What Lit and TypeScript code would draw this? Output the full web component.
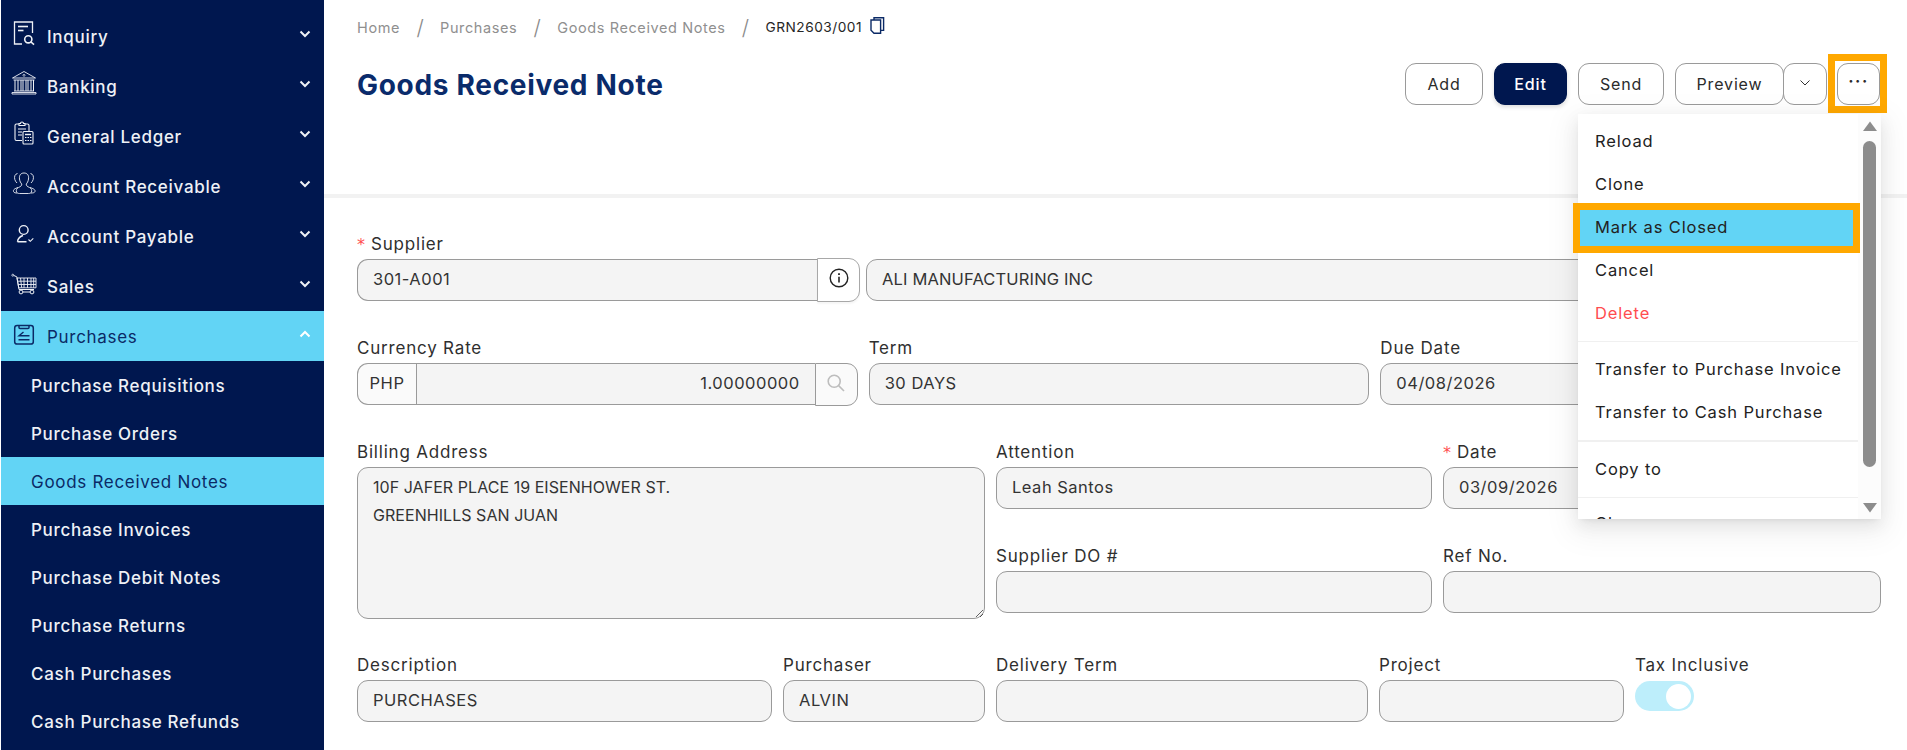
import { LitElement, html, css, svg } from "lit";
import { customElement } from "lit/decorators.js";

const icons: Record<string, unknown> = {
  inquiry: svg`<path d="M24.5 14V3H6.5V25H14"/><path d="M10 7.5H20" stroke-width="1.6"/><path d="M10 11.5H15.5" stroke-width="1.6"/><circle cx="20.3" cy="20.3" r="3.6" stroke-width="1.6"/><path d="M23 23L26 25.7" stroke-width="1.6"/>`,
  banking: svg`<path d="M4.5 9L16 2.5L27.5 9Z" stroke-width=".9"/><circle cx="16" cy="6.3" r="1" stroke-width=".7"/><path d="M5.5 11H26.5M6 22H26M4 25H28M4 25V23.5H28V25" stroke-width=".9"/><path d="M7 11V22M10 11V22M13 11V22M15 11V22M18 11V22M20 11V22M23 11V22M25.5 11V22" stroke-width="1"/>`,
  ledger: svg`<path d="M11 5H8.5A1.5 1.5 0 0 0 7 6.5V20A1.5 1.5 0 0 0 8.5 21.5H14" stroke-width="1.1"/><path d="M17 5H19.5A1.5 1.5 0 0 1 21 6.5V12" stroke-width="1.1"/><path d="M11 6.5V4.5H12.5A1.5 1.5 0 0 1 15.5 4.5H17V6.5Z" stroke-width="1.1"/><path d="M10 10H18M10 13H14M10 16H14" stroke-width="1"/><rect x="15" y="12.5" width="10" height="12.5" rx="1" stroke-width="1.1"/><path d="M17 15.5H23" stroke-width="1.4"/><path d="M17 18.5H18.5M19.5 18.5H21M22 18.5H23.5M17 21.5H18.5M19.5 21.5H21M22 21.5H23.5" stroke-width="1.2"/>`,
  ar: svg`<path d="M10 18.5C7 19.5 5 20.5 5.5 22.5C6 23.8 7.5 24 9 24M9.5 4.5C7 5 6 7.5 6.8 10.5C7.2 12 8 13 9 14" stroke-width=".9"/><path d="M22 18.5C25 19.5 27.5 20.5 27 22.5C26.5 23.8 25 24 23 24M22.5 4.5C25 5 26 7.5 25.2 10.5C24.8 12 24 13 23 14" stroke-width=".9"/><path d="M16 4C12.5 4 11 6.5 11.5 10C11.8 12.5 12.8 14 13.8 15C13.8 17 12.5 17.5 10.5 18.5C8.5 19.5 8 21 8.5 23C9 24 10 24.5 11.5 24.5H20.5C22 24.5 23 24 23.5 23C24 21 23.5 19.5 21.5 18.5C19.5 17.5 18.2 17 18.2 15C19.2 14 20.2 12.5 20.5 10C21 6.5 19.5 4 16 4Z" stroke-width=".9"/>`,
  ap: svg`<circle cx="15.7" cy="11" r="4.4" stroke-width="1.4"/><path d="M9.5 22.8C9.8 19.5 12 17.5 15 16.5M9.5 22.8H18.5" stroke-width="1.4"/><path d="M20.5 20.5L22.3 22.3L25.3 19.3" stroke-width="1.1"/>`,
  sales: svg`<circle cx="4.8" cy="6.2" r="1" stroke-width=".8"/><path d="M5.8 6.5L8.8 7.8L11 20.5H26" stroke-width="1"/><path d="M9 9H28V18.8H10.7ZM12.5 9L13.7 18.8M16 9V18.8M19.5 9V18.8M23 9V18.8M25.7 9V18.8M9.6 12.2H28M10.2 15.5H28" stroke-width=".9"/><circle cx="13" cy="23" r="1.9" stroke-width="1"/><circle cx="24" cy="23" r="1.9" stroke-width="1"/><path d="M15 23H22" stroke-width="1"/>`,
  purchases: svg`<rect x="6.7" y="6.5" width="18.6" height="18.6" rx="2.4" stroke-width="1.5"/><path d="M11 6.5V8.5A1 1 0 0 0 12 9.5H20A1 1 0 0 0 21 8.5V6.5" stroke-width="1.5"/><path d="M15.5 13L11 16.8H21.5M10.5 20.8H21.5" stroke-width="1.4"/>`,
};

const chevron = (up = false) =>
  html`<svg class="chev" viewBox="0 0 12 8" width="12" height="8"><path d=${up ? "M1.5 6.5L6 2L10.5 6.5" : "M1.5 1.5L6 6L10.5 1.5"}/></svg>`;

const topNav = [
  ["inquiry", "Inquiry"],
  ["banking", "Banking"],
  ["ledger", "General Ledger"],
  ["ar", "Account Receivable"],
  ["ap", "Account Payable"],
  ["sales", "Sales"],
];
const subNav = [
  "Purchase Requisitions",
  "Purchase Orders",
  "Goods Received Notes",
  "Purchase Invoices",
  "Purchase Debit Notes",
  "Purchase Returns",
  "Cash Purchases",
  "Cash Purchase Refunds",
];

@customElement("app-root")
export class AppRoot extends LitElement {
  static styles = css`
    :host {
      display: flex;
      height: 750px;
      overflow: hidden;
      background: #fff;
      font-family: "Inter", "Noto Sans", sans-serif;
      font-size: 16.5px;
      letter-spacing: 0.5px;
      color: #2b2b2b;
    }
    * { box-sizing: border-box; }

    /* sidebar */
    .side {
      flex: 0 0 323px;
      margin-left: 1px;
      background: #00174f;
      padding-top: 11px;
      color: #eef1f6;
      overflow: hidden;
      font-size: 17px;
      letter-spacing: 0.7px;
      font-weight: 500;
    }
    .row {
      height: 50px;
      display: flex;
      align-items: center;
      padding: 0 13px 0 7px;
    }
    .row svg.ic {
      width: 34px;
      height: 34px;
      margin-right: 5px;
      flex: none;
      fill: none;
      stroke: #eef1f6;
      stroke-width: 1.3;
    }
    .row span { flex: 1; padding-top: 2px; }
    .chev {
      fill: none;
      stroke: #eef1f6;
      stroke-width: 2;
      margin-bottom: 4px;
    }
    .row.active {
      background: #62d4f5;
      color: #0b2a66;
      font-weight: 400;
    }
    .row.active svg.ic { stroke: #0b2a66; }
    .row.active .chev { stroke: #fff; }
    .sub {
      height: 48px;
      display: flex;
      align-items: center;
      padding: 2px 0 0 30px;
    }
    .sub.active {
      background: #62d4f5;
      color: #0b2a66;
      font-weight: 400;
    }

    /* main */
    .main { flex: 1; min-width: 0; display: flex; flex-direction: column; }
    .head {
      height: 198px;
      flex: none;
      border-bottom: 4px solid #f2f2f2;
      padding: 0 26px 0 33px;
    }
    .crumbs {
      height: 34px;
      margin-top: 10px;
      display: flex;
      align-items: center;
      font-size: 14.5px;
      letter-spacing: 0.6px;
      color: #8f8f8f;
    }
    .crumbs .sl {
      font-size: 21px;
      font-weight: 300;
      color: #8a8a8a;
      width: 40px;
      text-align: center;
      letter-spacing: 0;
    }
    .crumbs .cur { color: #262626; font-size: 13.7px; letter-spacing: 0.5px; }
    .crumbs svg { margin-left: 8px; margin-top: -3px; fill: #fff; stroke: #0b2a66; stroke-width: 1.4; }
    .titlebar {
      display: flex;
      justify-content: space-between;
      align-items: flex-start;
      margin-top: 19px;
    }
    h1 {
      margin: 0;
      font-size: 28px;
      line-height: 44px;
      font-weight: 700;
      letter-spacing: 0.7px;
      color: #0a2b6b;
    }
    .btns { display: flex; align-items: flex-start; position: relative; margin-right: 1px; }
    .btn {
      height: 42px;
      border: 1px solid #9a9a9a;
      border-radius: 11px;
      background: #fff;
      display: flex;
      align-items: center;
      justify-content: center;
      color: #2b2b2b;
      font-size: 16px;
      letter-spacing: 0.85px;
      flex: none;
      margin-right: 11px;
    }
    .b-add { width: 78px; }
    .b-edit {
      width: 73px;
      background: #00174f;
      border-color: #00174f;
      color: #fff;
      font-weight: 500;
      box-shadow: 0 2px 4px rgba(0, 0, 0, 0.15);
    }
    .b-send { width: 86px; }
    .b-prev { width: 109px; margin-right: -1px; border-radius: 11px; }
    .b-drop { width: 44px; margin-right: 10px; }
    .b-drop svg { fill: none; stroke: #333; stroke-width: 1; margin-bottom: 2px; }
    .b-more {
      width: 43px;
      margin-right: 0;
      position: relative;
      padding-bottom: 6px;
      letter-spacing: 1.5px;
      font-weight: 700;
    }
    .b-more::after {
      content: "";
      position: absolute;
      left: -10px;
      right: -8px;
      top: -10px;
      bottom: -9px;
      border: 7px solid #ffa800;
      pointer-events: none;
    }

    /* form */
    .form {
      padding: 36px 26px 0 33px;
      display: flex;
      flex-direction: column;
      gap: 37px;
    }
    .r { display: grid; }
    .r1 { grid-template-columns: 503px 1fr; column-gap: 6px; }
    .r2 { grid-template-columns: 1fr 1fr 1fr; column-gap: 11px; margin-top: -1px; }
    .r3 {
      grid-template-columns: 628px 436px 1fr;
      grid-template-rows: 67px 73px;
      column-gap: 11px;
      row-gap: 37px;
      margin-top: -1px;
    }
    .r3 .ta { grid-row: span 2; }
    .r4 { grid-template-columns: 415px 202px 372px 245px 1fr; column-gap: 11px; margin-top: -1px; }
    label {
      display: block;
      height: 20px;
      line-height: 20px;
      margin-bottom: 5px;
      color: #2f2f2f;
      font-size: 17px;
      letter-spacing: 0.8px;
    }
    label i {
      font-style: normal;
      color: #ff4d4f;
      margin-right: 6px;
      font-family: "DejaVu Sans", sans-serif;
      font-size: 16px;
      letter-spacing: 0;
    }
    .inp {
      height: 42px;
      border: 1px solid #9a9a9a;
      border-radius: 11px;
      background: #f4f4f4;
      display: flex;
      align-items: center;
      padding: 0 15px 2px;
      color: #333;
      white-space: nowrap;
    }
    .inp.tight { letter-spacing: 0.15px; }
    .area {
      height: 152px;
      display: block;
      padding: 5px 15px;
      line-height: 28px;
      font-size: 16px;
      letter-spacing: 0.05px;
      white-space: pre-line;
      overflow: hidden;
      resize: both;
    }
    .group { display: flex; }
    .group .inp { flex: 1; min-width: 0; }
    .group .l { border-radius: 11px 0 0 11px; border-right: 0; }
    .group .m { border-radius: 0; border-right: 0; justify-content: flex-end; }
    .addon {
      flex: none;
      display: flex;
      align-items: center;
      justify-content: center;
      border: 1px solid #9a9a9a;
      background: #fafafa;
      height: 42px;
      color: #333;
    }
    .a-php { width: 59px; border-radius: 11px 0 0 11px; border-right: 0; padding-bottom: 2px; }
    .a-info {
      width: 43px;
      height: 44px;
      margin-top: -1px;
      border-radius: 0 11px 11px 0;
      background: #fff;
      border-color: #a8a8a8;
      box-shadow: 0 2px 2px rgba(0, 0, 0, 0.04);
    }
    .a-info svg { fill: none; stroke: #222; margin-bottom: 4px; }
    .a-search { width: 43px; height: 43px; border-radius: 0 11px 11px 0; }
    .a-search svg { fill: none; stroke: #bdbdbd; stroke-width: 1.6; margin-bottom: 3px; }
    .toggle {
      width: 59px;
      height: 30px;
      margin-top: 6px;
      border-radius: 15px;
      background: #bdeefb;
      display: flex;
      align-items: center;
      justify-content: flex-end;
      padding-right: 3px;
    }
    .toggle b { width: 25px; height: 25px; border-radius: 50%; background: #fff; }

    /* menu */
    .menu {
      position: absolute;
      top: 114px;
      left: 1578px;
      width: 303px;
      height: 405px;
      background: #fcfcfc;
      display: flex;
      box-shadow: 0 6px 16px rgba(0, 0, 0, 0.08), 0 3px 6px -4px rgba(0, 0, 0, 0.12), 0 9px 28px 8px rgba(0, 0, 0, 0.05);
      font-size: 16.5px;
      letter-spacing: 0.85px;
      color: #222;
      z-index: 5;
    }
    .list {
      flex: 0 0 280px;
      background: #fff;
      padding-top: 5px;
      clip-path: inset(0 -12px 0 -12px);
    }
    .it {
      height: 43px;
      display: flex;
      align-items: center;
      padding-left: 17px;
      position: relative;
      z-index: 0;
      white-space: nowrap;
    }
    .it.del { color: #ff4d4f; }
    .it.hl::before {
      content: "";
      position: absolute;
      z-index: -1;
      left: -5px;
      right: -2px;
      top: -2px;
      bottom: -5px;
      border: 7px solid #ffa800;
      background: #62d4f5;
    }
    .div { height: 1px; background: #f0f0f0; margin: 7px 0 5px; }
    .div.thick { height: 2px; }
    .div.last { margin-bottom: 3px; }
    .track { flex: 1; display: flex; flex-direction: column; align-items: center; padding-top: 7px; }
    .track svg { fill: #8c8c8c; flex: none; }
    .thumb { width: 13px; height: 326px; border-radius: 7px; background: #8c8c8c; margin: 10px 0 36px; flex: none; }
  `;

  field(text: string, cls = "", req = false, value = "") {
    return html`<div>
      <label>${req ? html`<i>*</i>` : ""}${text}</label>
      <div class="inp ${cls}">${value}</div>
    </div>`;
  }

  render() {
    return html`
      <nav class="side">
        ${topNav.map(
          ([k, t]) => html`<div class="row">
            <svg class="ic" viewBox="0 0 34 34">${icons[k]}</svg><span>${t}</span>${chevron()}
          </div>`
        )}
        <div class="row active">
          <svg class="ic" viewBox="0 0 34 34">${icons.purchases}</svg><span>Purchases</span>${chevron(true)}
        </div>
        ${subNav.map(
          (t) => html`<div class="sub ${t === "Goods Received Notes" ? "active" : ""}">${t}</div>`
        )}
      </nav>

      <main class="main">
        <header class="head">
          <div class="crumbs">
            <span>Home</span><span class="sl">/</span><span>Purchases</span><span class="sl">/</span>
            <span>Goods Received Notes</span><span class="sl">/</span><span class="cur">GRN2603/001</span>
            <svg width="15" height="17" viewBox="0 0 15 17">
              <path d="M4 3V.8H13.6V13.4H10.8"/>
              <path d="M1 3H10.6V16.2H4L1 13.2Z"/>
            </svg>
          </div>
          <div class="titlebar">
            <h1>Goods Received Note</h1>
            <div class="btns">
              <div class="btn b-add">Add</div>
              <div class="btn b-edit">Edit</div>
              <div class="btn b-send">Send</div>
              <div class="btn b-prev">Preview</div>
              <div class="btn b-drop"><svg width="12" height="8" viewBox="0 0 12 8"><path d="M1.5 1.5L6 6L10.5 1.5"/></svg></div>
              <div class="btn b-more">···</div>
            </div>
          </div>
        </header>

        <section class="form">
          <div class="r r1">
            <div>
              <label><i>*</i>Supplier</label>
              <div class="group">
                <div class="inp l">301-A001</div>
                <div class="addon a-info">
                  <svg width="20" height="20" viewBox="0 0 20 20">
                    <circle cx="10" cy="10" r="8.8" stroke-width="1.4"/>
                    <path d="M10 8.8V14.5" stroke-width="1.6"/>
                    <path d="M10 5.3V6.9" stroke-width="1.8"/>
                  </svg>
                </div>
              </div>
            </div>
            ${this.field("\u00a0", "tight", false, "ALI MANUFACTURING INC")}
          </div>

          <div class="r r2">
            <div>
              <label>Currency Rate</label>
              <div class="group">
                <div class="addon a-php">PHP</div>
                <div class="inp m">1.00000000</div>
                <div class="addon a-search">
                  <svg width="20" height="20" viewBox="0 0 20 20">
                    <circle cx="8.2" cy="8.2" r="6"/>
                    <path d="M12.6 12.6L18 18"/>
                  </svg>
                </div>
              </div>
            </div>
            ${this.field("Term", "", false, "30 DAYS")}
            ${this.field("Due Date", "", false, "04/08/2026")}
          </div>

          <div class="r r3">
            <div class="ta">
              <label>Billing Address</label>
              <div class="inp area">10F JAFER PLACE 19 EISENHOWER ST.
GREENHILLS SAN JUAN</div>
            </div>
            ${this.field("Attention", "", false, "Leah Santos")}
            ${this.field("Date", "", true, "03/09/2026")}
            ${this.field("Supplier DO #")}
            ${this.field("Ref No.")}
          </div>

          <div class="r r4">
            ${this.field("Description", "", false, "PURCHASES")}
            ${this.field("Purchaser", "", false, "ALVIN")}
            ${this.field("Delivery Term")}
            ${this.field("Project")}
            <div>
              <label>Tax Inclusive</label>
              <div class="toggle"><b></b></div>
            </div>
          </div>
        </section>
      </main>

      <aside class="menu">
        <div class="list">
          <div class="it">Reload</div>
          <div class="it">Clone</div>
          <div class="it hl">Mark as Closed</div>
          <div class="it">Cancel</div>
          <div class="it del">Delete</div>
          <div class="div"></div>
          <div class="it">Transfer to Purchase Invoice</div>
          <div class="it">Transfer to Cash Purchase</div>
          <div class="div thick"></div>
          <div class="it">Copy to</div>
          <div class="div last"></div>
          <div class="it">Close</div>
        </div>
        <div class="track">
          <svg width="14" height="10" viewBox="0 0 14 10"><path d="M7 .5L14 10H0Z"/></svg>
          <div class="thumb"></div>
          <svg width="14" height="10" viewBox="0 0 14 10"><path d="M7 9.5L0 0H14Z"/></svg>
        </div>
      </aside>
    `;
  }
}
